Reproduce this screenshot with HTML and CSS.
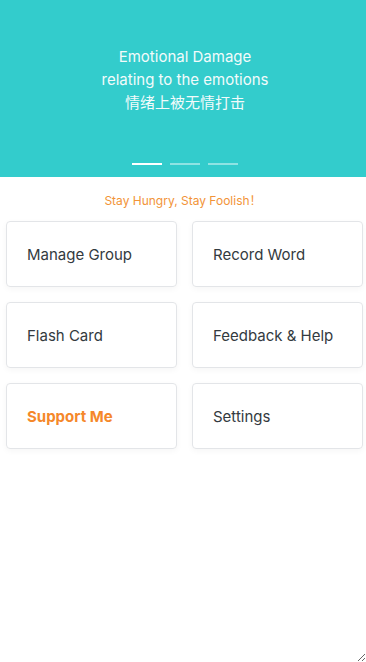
FILE: index.html
```html
<!DOCTYPE html>
<html lang="en">
<head>
    <meta charset="UTF-8">
    <meta name="viewport" content="width=device-width, initial-scale=1.0">
    <title>Word Book</title>
    <link rel="stylesheet" href="styles.css">
</head>
<body>
    <div class="app">
        <div class="banner">
            <div class="slide">
                <p>Emotional Damage</p>
                <p>relating to the emotions</p>
                <p>情绪上被无情打击</p>
            </div>
            <div class="dots">
                <span class="active"></span>
                <span></span>
                <span></span>
            </div>
        </div>
        <p class="motto">Stay Hungry, Stay Foolish！</p>
        <div class="menu">
            <div class="card">Manage Group</div>
            <div class="card">Record Word</div>
            <div class="card">Flash Card</div>
            <div class="card">Feedback &amp; Help</div>
            <div class="card support">Support Me</div>
            <div class="card">Settings</div>
        </div>
    </div>
</body>
</html>
```

FILE: styles.css
```css
body,p{
    margin: 0;
}
body{
    font-family: Inter, "Noto Sans CJK SC", sans-serif;
    background-color: #fff;
}
.app{
    height: 100vh;
    box-sizing: border-box;
    overflow: hidden;
    resize: both;
}
.banner{
    height: 177px;
    padding-left: 4px;
    background-color: #33cccc;
    display: flex;
    flex-direction: column;
}
.slide{
    flex: 1;
    display: flex;
    flex-direction: column;
    align-items: center;
    justify-content: center;
    padding-bottom: 5px;
    color: #f2fbfb;
    font-size: 15px;
    line-height: 23px;
}
.dots{
    display: flex;
    justify-content: center;
    gap: 8px;
    padding-bottom: 12px;
}
.dots>span{
    width: 30px;
    height: 2px;
    background-color: rgba(255, 255, 255, 0.45);
}
.dots>span.active{
    background-color: #fff;
}
.motto{
    margin: 14px 0 10px;
    text-align: center;
    font-size: 12px;
    line-height: 20px;
    color: #f29438;
}
.menu{
    display: grid;
    grid-template-columns: 1fr 1fr;
    gap: 15px 15px;
    padding: 0 3px 0 6px;
}
.card{
    height: 66px;
    box-sizing: border-box;
    display: flex;
    align-items: center;
    padding-left: 20px;
    border: 1px solid #e3e5e8;
    border-radius: 4px;
    box-shadow: 0 2px 6px rgba(0, 0, 0, 0.04);
    font-size: 15px;
    color: #333a40;
}
.support{
    color: #f5882a;
    font-weight: 700;
}
```
